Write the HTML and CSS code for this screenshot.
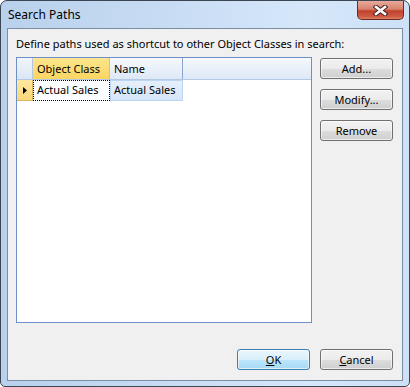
FILE: index.html
```html
<!DOCTYPE html>
<html lang="en">

<head>
    <meta charset="UTF-8">
    <title>Search Paths</title>
    <link rel="stylesheet" href="styles.css">
</head>

<body>
    <div class="window">
        <div class="titlebar">
            <span class="title">Search Paths</span>
            <div class="close">
                <svg width="15" height="11" viewBox="0 0 15 11">
                    <path d="M3 2 L12 9 M12 2 L3 9" stroke="#4a2020" stroke-width="4.6" stroke-linecap="square" />
                    <path d="M3 2 L12 9 M12 2 L3 9" stroke="#fff" stroke-width="2.6" stroke-linecap="square" />
                </svg>
            </div>
        </div>
        <div class="client">
            <div class="prompt">Define paths used as shortcut to other Object Classes in search:</div>
            <div class="main">
                <div class="grid">
                    <div class="grid-head">
                        <div class="corner"></div>
                        <div class="col col-class active">Object Class</div>
                        <div class="col col-name">Name</div>
                        <div class="col col-fill"></div>
                    </div>
                    <div class="grid-row">
                        <div class="row-head">
                            <svg width="4" height="7" viewBox="0 0 4 7">
                                <path d="M0 0 L4 3.5 L0 7 Z" fill="#000" />
                            </svg>
                        </div>
                        <div class="cell cell-class">Actual Sales</div>
                        <div class="cell cell-name">Actual Sales</div>
                    </div>
                </div>
                <div class="side-buttons">
                    <button class="btn">Add...</button>
                    <button class="btn">Modify...</button>
                    <button class="btn">Remove</button>
                </div>
            </div>
            <div class="footer">
                <button class="btn default"><u>O</u>K</button>
                <button class="btn"><u>C</u>ancel</button>
            </div>
        </div>
    </div>
</body>

</html>
```

FILE: styles.css
```css
* {
    box-sizing: border-box;
}

body {
    margin: 0;
    font-family: "Noto Sans", "Liberation Sans", sans-serif;
    font-size: 11px;
    color: #000;
    background: #fff;
}

.window {
    width: 410px;
    height: 387px;
    border: 1px solid #3b4654;
    border-radius: 7px 7px 5px 5px;
    background: linear-gradient(to right, #b9d1ec 0%, #c9ddf4 45%, #d6e7fa 75%, #cde0f5 100%);
    overflow: hidden;
}

.titlebar {
    height: 27px;
    display: flex;
    justify-content: space-between;
    align-items: flex-start;
    padding: 0 5px 0 7px;
}

.title {
    margin-top: 5px;
    line-height: 18px;
    font-size: 12px;
}

.close {
    width: 47px;
    height: 19px;
    border: 1px solid #6b2a22;
    border-top: none;
    border-radius: 0 0 5px 5px;
    background: linear-gradient(to bottom, #e9a99b 0%, #d7846f 45%, #c2412c 55%, #cc5a43 85%, #e07d62 100%);
    display: flex;
    justify-content: center;
    align-items: center;
}

.client {
    height: 353px;
    margin: 0 6px;
    border: 1px solid #7c8ea3;
    background: #f0f0f0;
    padding: 7px 9px 0 8px;
}

.prompt {
    line-height: 16px;
    height: 16px;
    margin-bottom: 5px;
    white-space: nowrap;
}

.main {
    display: flex;
    gap: 8px;
}

.grid {
    width: 296px;
    height: 266px;
    border: 1px solid #6d91c7;
    background: #fff;
}

.grid-head {
    display: flex;
    height: 22px;
    background: linear-gradient(to bottom, #f6f9fd, #dde8f6);
    border-bottom: 1px solid #b5c8e2;
}

.corner {
    width: 16px;
    background: linear-gradient(to bottom, #f1f5fb, #dbe6f4);
    border-right: 1px solid #b5c8e2;
}

.col {
    padding: 3px 0 0 4px;
    line-height: 16px;
    border-right: 1px solid #8aa6ce;
}

.col-class {
    width: 77px;
}

.col-name {
    width: 73px;
}

.col-fill {
    flex: 1;
    border-right: none;
}

.active {
    background: linear-gradient(to bottom, #fde58d, #fbd560);
    border-right: 1px solid #e7c05a;
}

.grid-row {
    display: flex;
    height: 21px;
}

.row-head {
    width: 16px;
    background: linear-gradient(to bottom, #fde8a0, #fbd77a);
    border-right: 1px solid #d9b75a;
    border-bottom: 1px solid #d9b75a;
    display: flex;
    align-items: center;
    justify-content: center;
}

.cell {
    line-height: 16px;
    padding: 1px 0 0 3px;
    white-space: nowrap;
}

.cell-class {
    width: 77px;
    border: 1px dotted #000;
    background: #fbfdff;
}

.cell-name {
    width: 73px;
    background: linear-gradient(to bottom, #e6f0fb, #d5e5f8);
    border: 1px solid #bcd5f2;
}

.side-buttons {
    display: flex;
    flex-direction: column;
    gap: 10px;
    margin-top: 1px;
}

.btn {
    width: 73px;
    height: 21px;
    padding: 0;
    font-family: inherit;
    font-size: 11px;
    color: #000;
    border: 1px solid #707070;
    border-radius: 3px;
    background: linear-gradient(to bottom, #f2f2f2 0%, #ebebeb 50%, #dddddd 51%, #cfcfcf 100%);
    box-shadow: inset 0 0 0 1px rgba(255, 255, 255, 0.6);
}

.btn.default {
    border-color: #3c7fb1;
    background: linear-gradient(to bottom, #eaf6fd 0%, #d9f0fc 50%, #bee6fd 51%, #a7d9f5 100%);
}

.footer {
    display: flex;
    justify-content: flex-end;
    gap: 10px;
    margin-top: 26px;
}
```
